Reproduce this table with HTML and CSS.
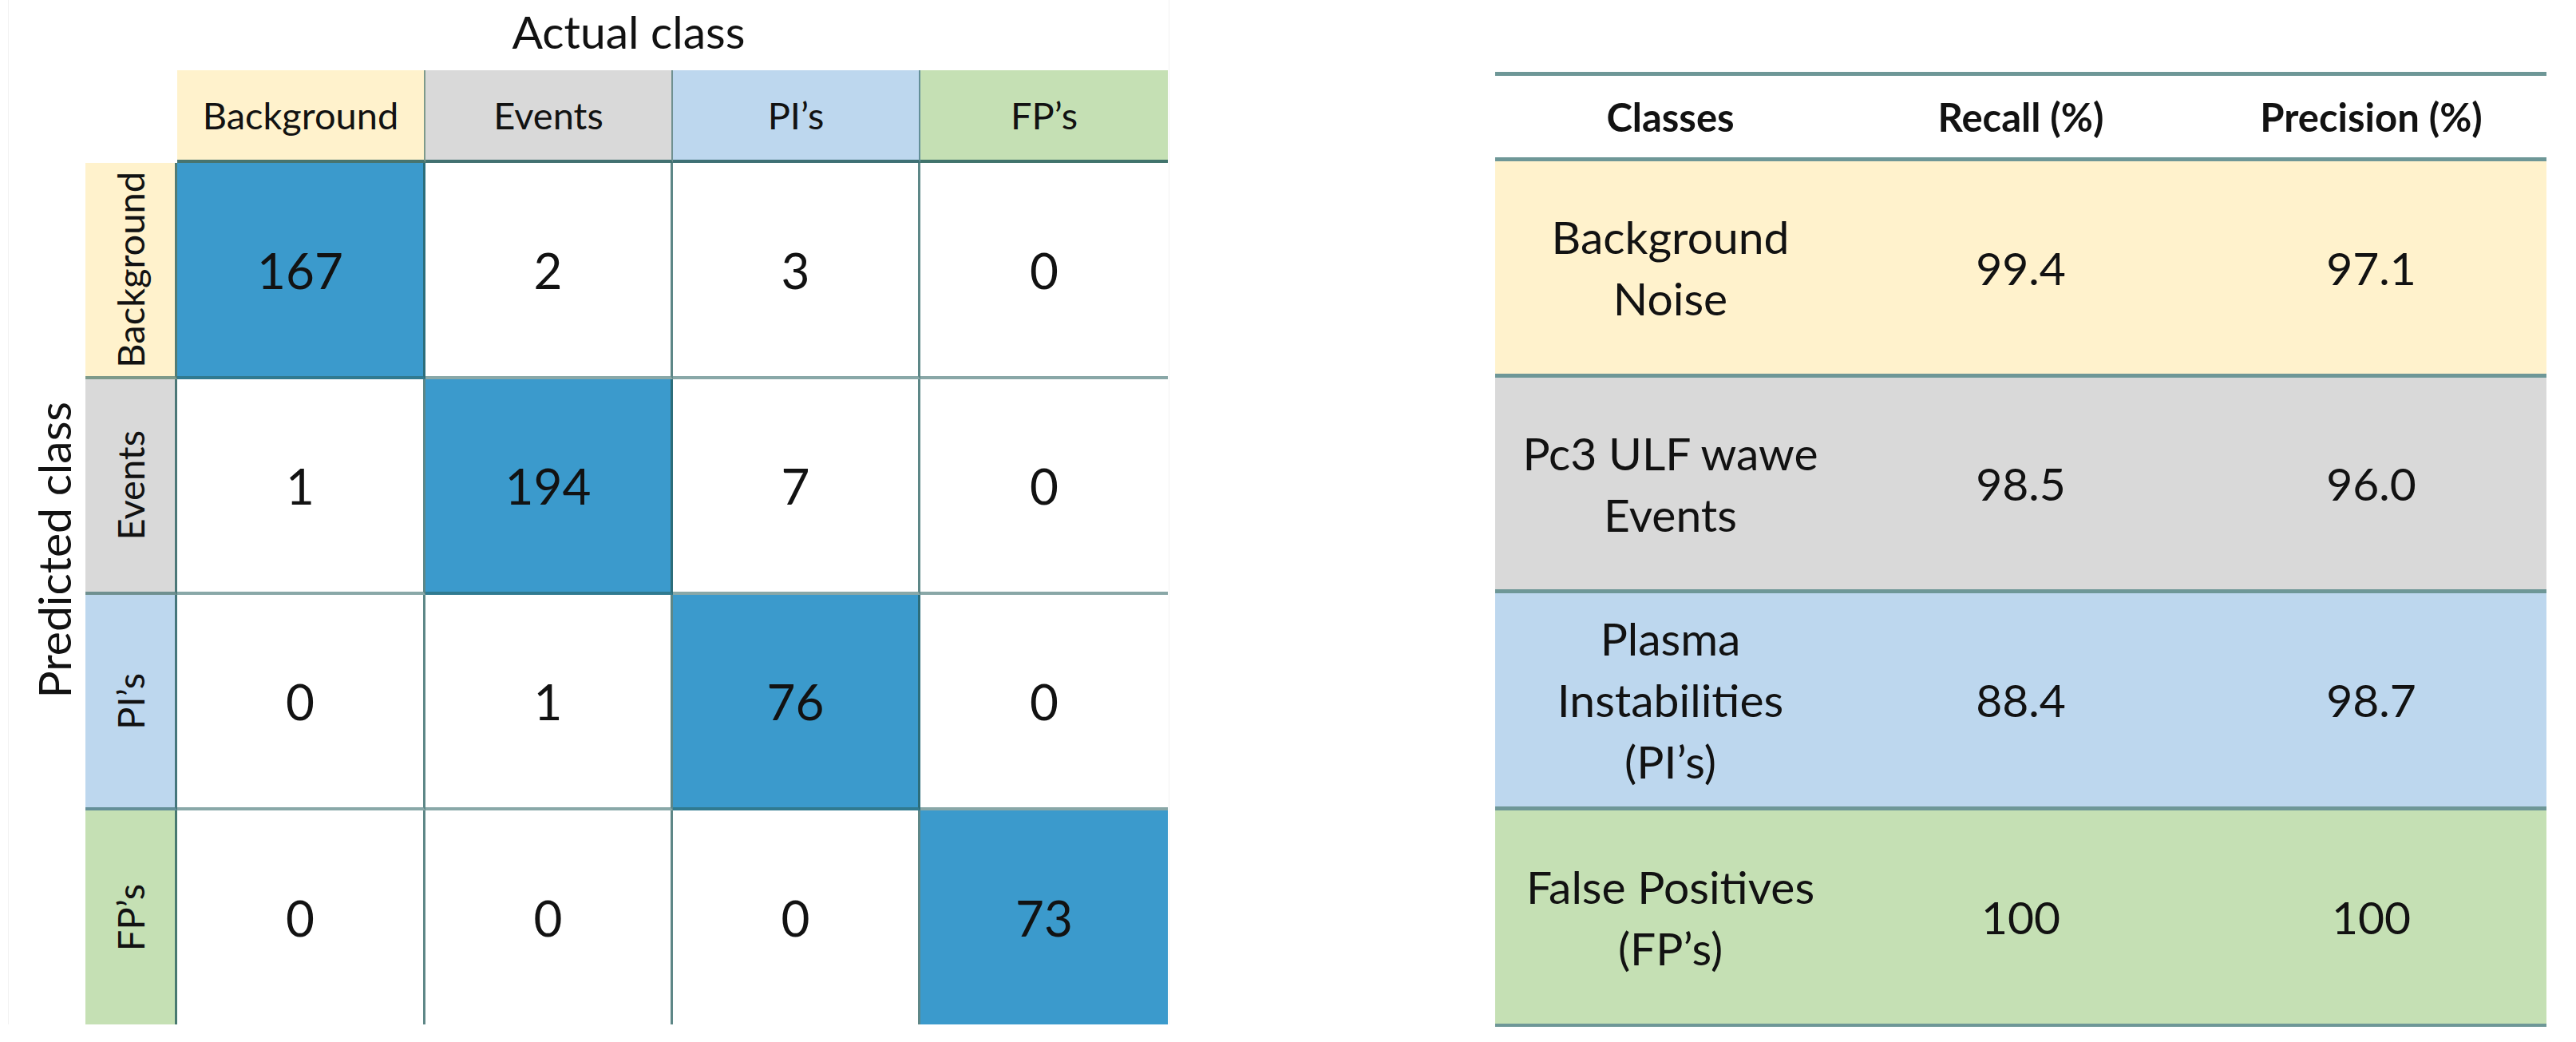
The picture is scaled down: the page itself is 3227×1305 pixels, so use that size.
FILE: index.html
```html
<!DOCTYPE html>
<html lang="en">
<head>
<meta charset="utf-8">
<title>Confusion matrix and class metrics</title>
<link rel="stylesheet" href="styles.css">
</head>
<body>
<main class="page">
  <section class="matrix-fig">
    <div class="matrix">
      <div class="pred-title"><span>Predicted class</span></div>

      <div class="corner"></div>
      <div class="actual-title">Actual class</div>

      <div class="corner"></div>
      <div class="colhead bg-yellow sep">Background</div>
      <div class="colhead bg-gray sep">Events</div>
      <div class="colhead bg-blue sep">PI’s</div>
      <div class="colhead bg-green">FP’s</div>

      <div class="rowhead bg-yellow"><span>Background</span></div>
      <div class="cell diag">167</div>
      <div class="cell">2</div>
      <div class="cell">3</div>
      <div class="cell end">0</div>

      <div class="rowhead bg-gray"><span>Events</span></div>
      <div class="cell">1</div>
      <div class="cell diag">194</div>
      <div class="cell">7</div>
      <div class="cell end">0</div>

      <div class="rowhead bg-blue"><span>PI’s</span></div>
      <div class="cell">0</div>
      <div class="cell">1</div>
      <div class="cell diag">76</div>
      <div class="cell end">0</div>

      <div class="rowhead bg-green bottom"><span>FP’s</span></div>
      <div class="cell bottom">0</div>
      <div class="cell bottom">0</div>
      <div class="cell bottom">0</div>
      <div class="cell diag end bottom">73</div>
    </div>
  </section>

  <section class="metrics">
    <div class="mrow mhead">
      <div>Classes</div>
      <div>Recall (%)</div>
      <div>Precision (%)</div>
    </div>
    <div class="mrow bg-yellow">
      <div>Background<br>Noise</div>
      <div>99.4</div>
      <div>97.1</div>
    </div>
    <div class="mrow bg-gray">
      <div>Pc3 ULF wawe<br>Events</div>
      <div>98.5</div>
      <div>96.0</div>
    </div>
    <div class="mrow bg-blue">
      <div>Plasma<br>Instabilities<br>(PI’s)</div>
      <div>88.4</div>
      <div>98.7</div>
    </div>
    <div class="mrow bg-green mlast">
      <div>False Positives<br>(FP’s)</div>
      <div>100</div>
      <div>100</div>
    </div>
  </section>
</main>
</body>
</html>
```

FILE: styles.css
```css
* {
  box-sizing: border-box;
}

html, body {
  margin: 0;
  padding: 0;
  background: #ffffff;
}

body {
  font-family: Lato, "Open Sans", "Liberation Sans", sans-serif;
  color: #121212;
}

.page {
  display: flex;
  align-items: flex-start;
  width: 3227px;
  height: 1305px;
  padding-left: 10px;
}

/* ---------- Confusion matrix ---------- */

.matrix-fig {
  border-left: 1px solid #f2f2f2;
  border-right: 1px solid #f2f2f2;
  padding-right: 1px;
}

.matrix {
  display: grid;
  grid-template-columns: 96px 115px 311px 310px 310px 310px;
  grid-template-rows: 88px 116px 271px 270px 270px 268px;
}

.corner {
  grid-column: span 2;
}

.actual-title {
  grid-column: span 4;
  text-align: center;
  font-size: 57px;
  line-height: 57px;
  padding-top: 11px;
  padding-right: 110px;
  white-space: nowrap;
}

.pred-title {
  grid-column: 1;
  grid-row: 3 / 7;
  display: flex;
  align-items: center;
  justify-content: center;
  padding-left: 16px;
  padding-bottom: 110px;
}

.pred-title span {
  writing-mode: vertical-rl;
  transform: rotate(180deg);
  font-size: 57px;
  line-height: 57px;
  white-space: nowrap;
}

.colhead {
  display: flex;
  align-items: center;
  justify-content: center;
  font-size: 47px;
  border-bottom: 4px solid rgba(40, 95, 95, 0.85);
}

.colhead.sep {
  border-right: 2px solid rgba(40, 95, 95, 0.6);
}

.rowhead {
  display: flex;
  align-items: center;
  justify-content: center;
  border-right: 3px solid rgba(40, 95, 95, 0.8);
  border-bottom: 4px solid rgba(40, 95, 95, 0.6);
}

.rowhead span {
  writing-mode: vertical-rl;
  transform: rotate(180deg);
  font-size: 47px;
  line-height: 47px;
  white-space: nowrap;
}

.cell {
  display: flex;
  align-items: center;
  justify-content: center;
  font-size: 62px;
  background: #ffffff;
  border-right: 3px solid rgba(40, 95, 95, 0.75);
  border-bottom: 4px solid rgba(40, 95, 95, 0.55);
}

.cell.end {
  border-right: 0;
}

.cell.bottom,
.rowhead.bottom {
  border-bottom: 0;
}

.cell.diag {
  background: #3b9acc;
}

/* ---------- Colours ---------- */

.bg-yellow { background: #fff2cc; }
.bg-gray   { background: #d9d9d9; }
.bg-blue   { background: #bdd7ee; }
.bg-green  { background: #c5e0b4; }

/* ---------- Metrics table ---------- */

.metrics {
  margin-left: 408px;
  margin-top: 90px;
  width: 1317px;
  display: grid;
  grid-template-rows: 107px 271px 270px 272px 271px;
  border-top: 5px solid #6e9797;
}

.mrow {
  display: grid;
  grid-template-columns: repeat(3, 1fr);
  align-items: center;
  text-align: center;
  font-size: 57px;
  line-height: 77px;
  border-bottom: 5px solid #6e9797;
}

.mhead {
  font-weight: 700;
  font-size: 49px;
  line-height: 60px;
}

.mlast {
  border-bottom-width: 4px;
}
```
